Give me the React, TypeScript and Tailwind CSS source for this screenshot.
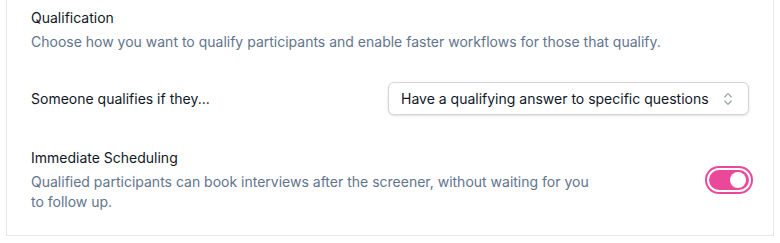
import { ChevronsUpDown } from 'lucide-react'

export default function App() {
  return (
    <div className="min-h-screen bg-white px-[6px] font-['Inter',sans-serif]">
      <div className="border-x border-b border-gray-200 px-6 pt-2 pb-[23px]">
        <div>
          <h3 className="text-sm leading-5 text-gray-900">Qualification</h3>
          <p className="mt-1 text-sm leading-5 text-slate-500">
            Choose how you want to qualify participants and enable faster workflows for those that qualify.
          </p>
        </div>

        <div className="mt-[30px] flex items-center justify-between">
          <span className="text-sm text-gray-900">Someone qualifies if they...</span>
          <button className="flex h-[33px] w-[361px] items-center justify-between rounded-md border border-gray-300 bg-white pl-3 pr-3 text-sm text-gray-900 shadow-sm">
            <span>Have a qualifying answer to specific questions</span>
            <ChevronsUpDown size={16} strokeWidth={1.75} className="text-gray-400" />
          </button>
        </div>

        <div className="mt-[33px] flex items-center justify-between">
          <div className="max-w-[560px]">
            <h3 className="text-sm leading-5 text-gray-900">Immediate Scheduling</h3>
            <p className="mt-1 text-sm leading-5 text-slate-500">
              Qualified participants can book interviews after the screener, without waiting for you to follow up.
            </p>
          </div>
          <button className="relative inline-flex h-5 w-10 shrink-0 items-center rounded-full bg-[#ec4899] ring-2 ring-[#ec4899] ring-offset-2">
            <span className="absolute right-[3px] h-4 w-4 rounded-full bg-white" />
          </button>
        </div>
      </div>
    </div>
  )
}
